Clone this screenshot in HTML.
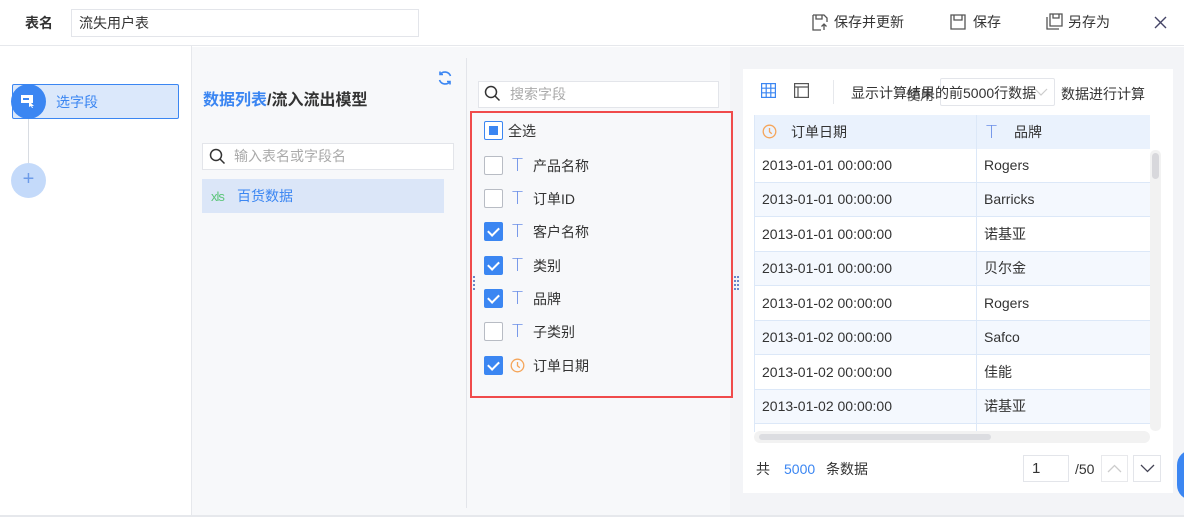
<!DOCTYPE html>
<html><head><meta charset="utf-8"><style>
*{box-sizing:border-box;margin:0;padding:0}
body{width:1184px;height:517px;overflow:hidden;position:relative;background:#fff;font-family:"Liberation Sans","Noto Sans CJK SC",sans-serif;font-size:14px;color:#333;line-height:18px}
.a{position:absolute}
.cb{position:absolute;width:19px;height:19px;border:1px solid #b8bcc4;border-radius:2px;background:#fff}
.cb.on{background:#3b86f2;border-color:#3b86f2}
.cb.on:after{content:"";position:absolute;left:5px;top:2px;width:5px;height:9px;border:solid #fff;border-width:0 2px 2px 0;transform:rotate(45deg)}
.T{position:absolute;color:#6b8fe8;font-size:18px;line-height:18px;font-family:"DejaVu Sans",sans-serif;font-weight:300}
.row{position:absolute;left:754px;width:396px;height:34px;border-bottom:1px solid #dce8f8;font-size:14px;color:#333;line-height:33px}
.row span{position:absolute;top:0}
</style></head><body>
<div class="a" style="left:0;top:0;width:1184px;height:46px;border-bottom:1px solid #e6e8ec"></div>
<div class="a" style="left:25px;top:14px;font-weight:bold;font-size:14px">表名</div>
<div class="a" style="left:71px;top:9px;width:348px;height:28px;border:1px solid #e3e5ea;padding:4px 7px;font-size:14px">流失用户表</div>
<svg class="a" style="left:812px;top:14px" width="16" height="17" viewBox="0 0 16 17" fill="none" stroke="#555" stroke-width="1.3"><path d="M1 1h11l3 3v4M1 1v15h8M4 1v4h6V1"/><path d="M12 16V10M9.5 12.5L12 10l2.5 2.5"/></svg>
<div class="a" style="left:834px;top:13px">保存并更新</div>
<svg class="a" style="left:950px;top:14px" width="16" height="16" viewBox="0 0 16 16" fill="none" stroke="#555" stroke-width="1.3"><path d="M1 1h14v14H1zM4 1v5h8V1"/></svg>
<div class="a" style="left:973px;top:13px">保存</div>
<svg class="a" style="left:1046px;top:13px" width="17" height="17" viewBox="0 0 17 17" fill="none" stroke="#555" stroke-width="1.3"><path d="M4 1h12v12H4zM7 1v4h6V1M1 4v12h12"/></svg>
<div class="a" style="left:1068px;top:13px">另存为</div>
<svg class="a" style="left:1154px;top:16px" width="13" height="13" viewBox="0 0 13 13" stroke="#446" stroke-width="1.4"><path d="M1 1l11 11M12 1L1 12"/></svg>

<div class="a" style="left:191px;top:46px;width:1px;height:470px;background:#e6e8ec"></div>
<div class="a" style="left:12px;top:84px;width:167px;height:35px;background:#dbe8fb;border:1px solid #3b86f2;border-radius:2px"></div>
<div class="a" style="left:11px;top:84px;width:35px;height:35px;border-radius:50%;background:#3b86f2"></div>
<svg class="a" style="left:20px;top:93px" width="17" height="17" viewBox="0 0 17 17"><rect x="1" y="2" width="12" height="8" fill="#fff"/><rect x="3" y="5" width="6" height="2" fill="#3b86f2"/><path d="M9 8l5 5-2 0 1 2-1 0-1-2-2 1z" fill="#fff"/></svg>
<div class="a" style="left:56px;top:93px;color:#3b86f2">选字段</div>
<div class="a" style="left:28px;top:119px;width:1px;height:44px;background:#d8dce2"></div>
<div class="a" style="left:11px;top:163px;width:35px;height:35px;border-radius:50%;background:#c4dafa;color:#6d9be8;text-align:center;line-height:33px;font-size:20px;font-weight:300">+</div>

<div class="a" style="left:192px;top:47px;width:538px;height:468px;background:#f7f8fa"></div>
<div class="a" style="left:730px;top:47px;width:454px;height:468px;background:#f3f4f7"></div>
<div class="a" style="left:466px;top:58px;width:1px;height:450px;background:#e3e5ea"></div>
<svg class="a" style="left:437px;top:70px" width="16" height="16" viewBox="0 0 16 16" fill="none" stroke="#3b86f2" stroke-width="1.6"><path d="M13.5 6A6 6 0 0 0 3 4.5M2.5 10A6 6 0 0 0 13 11.5"/><path d="M3 1.5v3h3M13 14.5v-3h-3"/></svg>
<div class="a" style="left:203px;top:91px;font-size:16px;font-weight:bold;color:#333;line-height:20px"><span style="color:#3b86f2">数据列表</span>/流入流出模型</div>
<div class="a" style="left:202px;top:143px;width:252px;height:27px;background:#fff;border:1px solid #e3e5ea"></div>
<svg class="a" style="left:209px;top:148px" width="17" height="17" viewBox="0 0 17 17" fill="none" stroke="#333" stroke-width="1.5"><circle cx="7" cy="7" r="5.5"/><path d="M11 11l4.5 4.5"/></svg>
<div class="a" style="left:234px;top:147px;color:#aaa;font-size:14px">输入表名或字段名</div>
<div class="a" style="left:202px;top:179px;width:242px;height:34px;background:#dbe6f8"></div>
<div class="a" style="left:211px;top:188px;color:#5bc57a;font-size:13px;letter-spacing:-1px">xls</div>
<div class="a" style="left:237px;top:187px;color:#3b86f2">百货数据</div>

<div class="a" style="left:478px;top:81px;width:241px;height:27px;background:#fff;border:1px solid #e3e5ea"></div>
<svg class="a" style="left:484px;top:85px" width="17" height="17" viewBox="0 0 17 17" fill="none" stroke="#333" stroke-width="1.5"><circle cx="7" cy="7" r="5.5"/><path d="M11 11l4.5 4.5"/></svg>
<div class="a" style="left:510px;top:85px;color:#aaa">搜索字段</div>
<div class="a" style="left:470px;top:111px;width:263px;height:287px;border:2px solid #f04b4b"></div>
<div class="cb" style="left:484px;top:121px;border-color:#3b86f2"><div style="position:absolute;left:4px;top:4px;width:9px;height:9px;background:#3b86f2"></div></div>
<div class="a" style="left:508px;top:122px">全选</div>
<div class="cb" style="left:484px;top:156px"></div><div class="T" style="left:512px;top:157px">T</div><div class="a" style="left:533px;top:157px">产品名称</div>
<div class="cb" style="left:484px;top:189px"></div><div class="T" style="left:512px;top:190px">T</div><div class="a" style="left:533px;top:190px">订单ID</div>
<div class="cb on" style="left:484px;top:222px"></div><div class="T" style="left:512px;top:223px">T</div><div class="a" style="left:533px;top:223px">客户名称</div>
<div class="cb on" style="left:484px;top:256px"></div><div class="T" style="left:512px;top:257px">T</div><div class="a" style="left:533px;top:257px">类别</div>
<div class="cb on" style="left:484px;top:289px"></div><div class="T" style="left:512px;top:290px">T</div><div class="a" style="left:533px;top:290px">品牌</div>
<div class="cb" style="left:484px;top:322px"></div><div class="T" style="left:512px;top:323px">T</div><div class="a" style="left:533px;top:323px">子类别</div>
<div class="cb on" style="left:484px;top:356px"></div>
<svg class="a" style="left:510px;top:358px" width="15" height="15" viewBox="0 0 15 15" fill="none" stroke="#f5a55a" stroke-width="1.3"><circle cx="7.5" cy="7.5" r="6.3"/><path d="M7.5 4v3.8l2.3 2"/></svg>
<div class="a" style="left:533px;top:357px">订单日期</div>
<div class="a" style="left:473px;top:276px;width:2px;height:14px;border-left:2px dotted #6a86c8"></div>
<div class="a" style="left:734px;top:276px;width:5px;height:14px;border-left:2px dotted #6a86c8;border-right:2px dotted #6a86c8"></div>

<div class="a" style="left:743px;top:69px;width:430px;height:424px;background:#fff"></div>
<svg class="a" style="left:761px;top:83px" width="15" height="15" viewBox="0 0 15 15" fill="none" stroke="#3b86f2" stroke-width="1.2"><rect x="0.6" y="0.6" width="13.8" height="13.8"/><path d="M5.2 0.6v13.8M9.8 0.6v13.8M0.6 5.2h13.8M0.6 9.8h13.8"/></svg>
<svg class="a" style="left:794px;top:83px" width="15" height="15" viewBox="0 0 15 15" fill="none" stroke="#555" stroke-width="1.2"><rect x="0.6" y="0.6" width="13.8" height="13.8"/><path d="M0.6 4h13.8M4 4v10.4"/></svg>
<div class="a" style="left:833px;top:80px;width:1px;height:24px;background:#e6e8ec"></div>
<div class="a" style="left:940px;top:78px;width:115px;height:28px;border:1px solid #e3e5ea;border-radius:2px"></div>
<div class="a" style="left:851px;top:84px;font-size:14px;white-space:nowrap">显示计算结果的前5000行数据</div>
<div class="a" style="left:906px;top:86px;font-size:14px;color:#333;opacity:.8">使用</div>
<svg class="a" style="left:1034px;top:87px" width="14" height="10" viewBox="0 0 14 10" fill="none" stroke="#ccc" stroke-width="1.2"><path d="M1 2l6 6 6-6"/></svg>
<div class="a" style="left:1061px;top:85px">数据进行计算</div>

<div class="a" style="left:754px;top:115px;width:396px;height:34px;background:#eaf2fd;border-left:1px solid #dce8f8"></div>
<svg class="a" style="left:762px;top:124px" width="15" height="15" viewBox="0 0 15 15" fill="none" stroke="#f5a55a" stroke-width="1.3"><circle cx="7.5" cy="7.5" r="6.3"/><path d="M7.5 4v3.8l2.3 2"/></svg>
<div class="a" style="left:791px;top:123px">订单日期</div>
<div class="T" style="left:986px;top:124px">T</div>
<div class="a" style="left:1014px;top:123px">品牌</div>

<div class="row" style="top:149px;background:#fff"><span style="left:8px">2013-01-01 00:00:00</span><span style="left:230px">Rogers</span></div>
<div class="row" style="top:183px;background:#f4f8fe"><span style="left:8px">2013-01-01 00:00:00</span><span style="left:230px">Barricks</span></div>
<div class="row" style="top:218px;background:#fff"><span style="left:8px">2013-01-01 00:00:00</span><span style="left:230px">诺基亚</span></div>
<div class="row" style="top:252px;background:#f4f8fe"><span style="left:8px">2013-01-01 00:00:00</span><span style="left:230px">贝尔金</span></div>
<div class="row" style="top:287px;background:#fff"><span style="left:8px">2013-01-02 00:00:00</span><span style="left:230px">Rogers</span></div>
<div class="row" style="top:321px;background:#f4f8fe"><span style="left:8px">2013-01-02 00:00:00</span><span style="left:230px">Safco</span></div>
<div class="row" style="top:356px;background:#fff"><span style="left:8px">2013-01-02 00:00:00</span><span style="left:230px">佳能</span></div>
<div class="row" style="top:390px;background:#f4f8fe"><span style="left:8px">2013-01-02 00:00:00</span><span style="left:230px">诺基亚</span></div>
<div class="row" style="top:424px;height:8px;background:#fff;border:0"></div>
<div class="a" style="left:754px;top:115px;width:1px;height:317px;background:#dce8f8"></div>
<div class="a" style="left:976px;top:115px;width:1px;height:317px;background:#dce8f8"></div>
<div class="a" style="left:1150px;top:150px;width:11px;height:281px;background:#f2f2f2;border-radius:5px"></div>
<div class="a" style="left:1152px;top:153px;width:7px;height:26px;background:#d8d8dc;border-radius:4px"></div>
<div class="a" style="left:754px;top:431px;width:396px;height:12px;background:#f2f2f2;border-radius:6px"></div>
<div class="a" style="left:759px;top:434px;width:232px;height:6px;background:#dcdde1;border-radius:3px"></div>

<div class="a" style="left:756px;top:460px">共</div>
<div class="a" style="left:784px;top:460px;color:#3b86f2">5000</div>
<div class="a" style="left:826px;top:460px">条数据</div>
<div class="a" style="left:1023px;top:455px;width:46px;height:27px;border:1px solid #e3e5ea;padding:4px 8px;font-size:15px">1</div>
<div class="a" style="left:1075px;top:460px">/50</div>
<div class="a" style="left:1101px;top:455px;width:27px;height:27px;border:1px solid #e8e9ec"></div>
<svg class="a" style="left:1107px;top:464px" width="15" height="9" viewBox="0 0 15 9" fill="none" stroke="#ccc" stroke-width="1.3"><path d="M1 8l6.5-6.5L14 8"/></svg>
<div class="a" style="left:1133px;top:455px;width:28px;height:27px;border:1px solid #e3e5ea"></div>
<svg class="a" style="left:1140px;top:464px" width="15" height="9" viewBox="0 0 15 9" fill="none" stroke="#445" stroke-width="1.3"><path d="M1 1l6.5 6.5L14 1"/></svg>
<div class="a" style="left:1177px;top:450px;width:30px;height:50px;border-radius:15px;background:#3b86f2"></div>
<div class="a" style="left:0;top:515px;width:1184px;height:2px;background:#e6e8ec"></div>
</body></html>
